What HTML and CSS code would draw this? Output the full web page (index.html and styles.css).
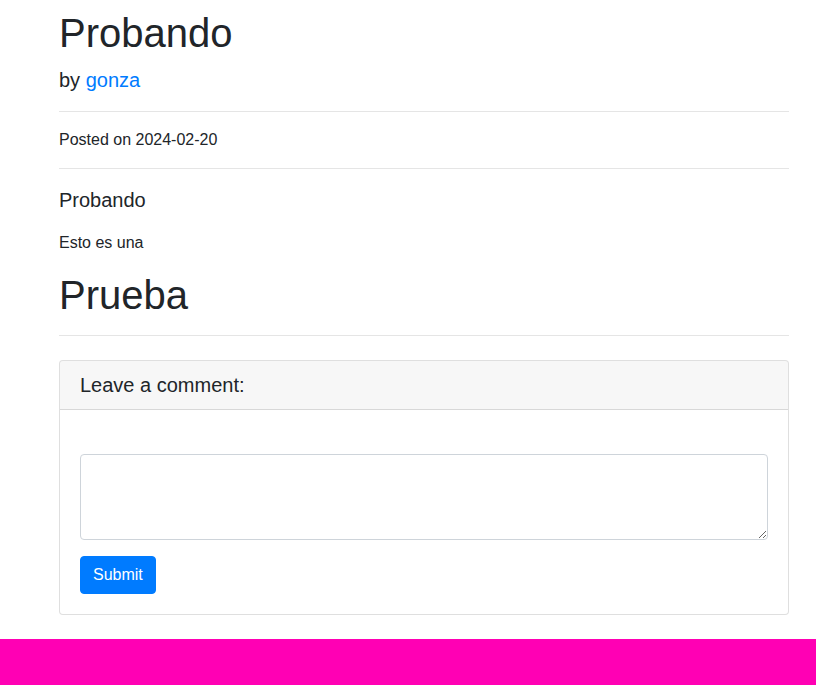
FILE: index.html
```html
<!DOCTYPE html>
<html lang="es">
<head>
<meta charset="utf-8">
<title>Probando</title>
<link rel="stylesheet" href="styles.css">
</head>
<body>
<main class="post">
  <h1 class="post-title">Probando</h1>
  <p class="lead">by <a href="#">gonza</a></p>
  <hr class="rule">
  <p class="text">Posted on 2024-02-20</p>
  <hr class="rule">
  <p class="lead">Probando</p>
  <p class="text">Esto es una</p>
  <h1 class="post-heading">Prueba</h1>
  <hr class="rule">
  <section class="card">
    <h5 class="card-header">Leave a comment:</h5>
    <div class="card-body">
      <form class="comment-form">
        <textarea class="form-control" rows="3"></textarea>
        <button type="button" class="btn">Submit</button>
      </form>
    </div>
  </section>
</main>
<footer class="footer"></footer>
</body>
</html>
```
FILE: styles.css
```css
* { box-sizing: border-box; }
html, body {
  margin: 0;
  padding: 0;
}
body {
  font-family: "Liberation Sans", Arial, sans-serif;
  font-size: 16px;
  line-height: 1.5;
  color: #212529;
  background: #fff;
}
.post {
  width: 730px;
  margin-left: 59px;
  padding-top: 9px;
}
.post-title, .post-heading {
  font-size: 40px;
  font-weight: 400;
  line-height: 1.2;
  margin: 0 0 8px;
}
.lead {
  font-size: 20px;
  font-weight: 400;
  margin: 0 0 16px;
}
.lead a {
  color: #007bff;
  text-decoration: none;
}
.text {
  margin: 0 0 16px;
}
.rule {
  margin: 16px 0;
  border: 0;
  border-top: 1px solid rgba(0, 0, 0, 0.1);
  height: 0;
}
.card {
  margin: 24px 0;
  border: 1px solid rgba(0, 0, 0, 0.125);
  border-radius: 4px;
  background: #fff;
}
.card-header {
  margin: 0;
  padding: 12px 20px;
  font-size: 20px;
  font-weight: 400;
  line-height: 1.2;
  background: rgba(0, 0, 0, 0.03);
  border-bottom: 1px solid rgba(0, 0, 0, 0.125);
  border-radius: 3px 3px 0 0;
}
.card-body {
  padding: 20px;
}
.comment-form {
  display: flex;
  flex-direction: column;
  align-items: flex-start;
  gap: 16px;
  padding-top: 24px;
}
.form-control {
  display: block;
  width: 100%;
  height: 86px;
  padding: 6px 12px;
  font-family: inherit;
  font-size: 16px;
  line-height: 1.5;
  color: #495057;
  border: 1px solid #ced4da;
  border-radius: 4px;
  background: #fff;
  margin: 0;
}
.btn {
  font-family: inherit;
  font-size: 16px;
  line-height: 1.5;
  padding: 6px 12px;
  color: #fff;
  background: #007bff;
  border: 1px solid #007bff;
  border-radius: 4px;
  margin: 0;
}
.footer {
  height: 60px;
  background: #ff00b4;
}
```
